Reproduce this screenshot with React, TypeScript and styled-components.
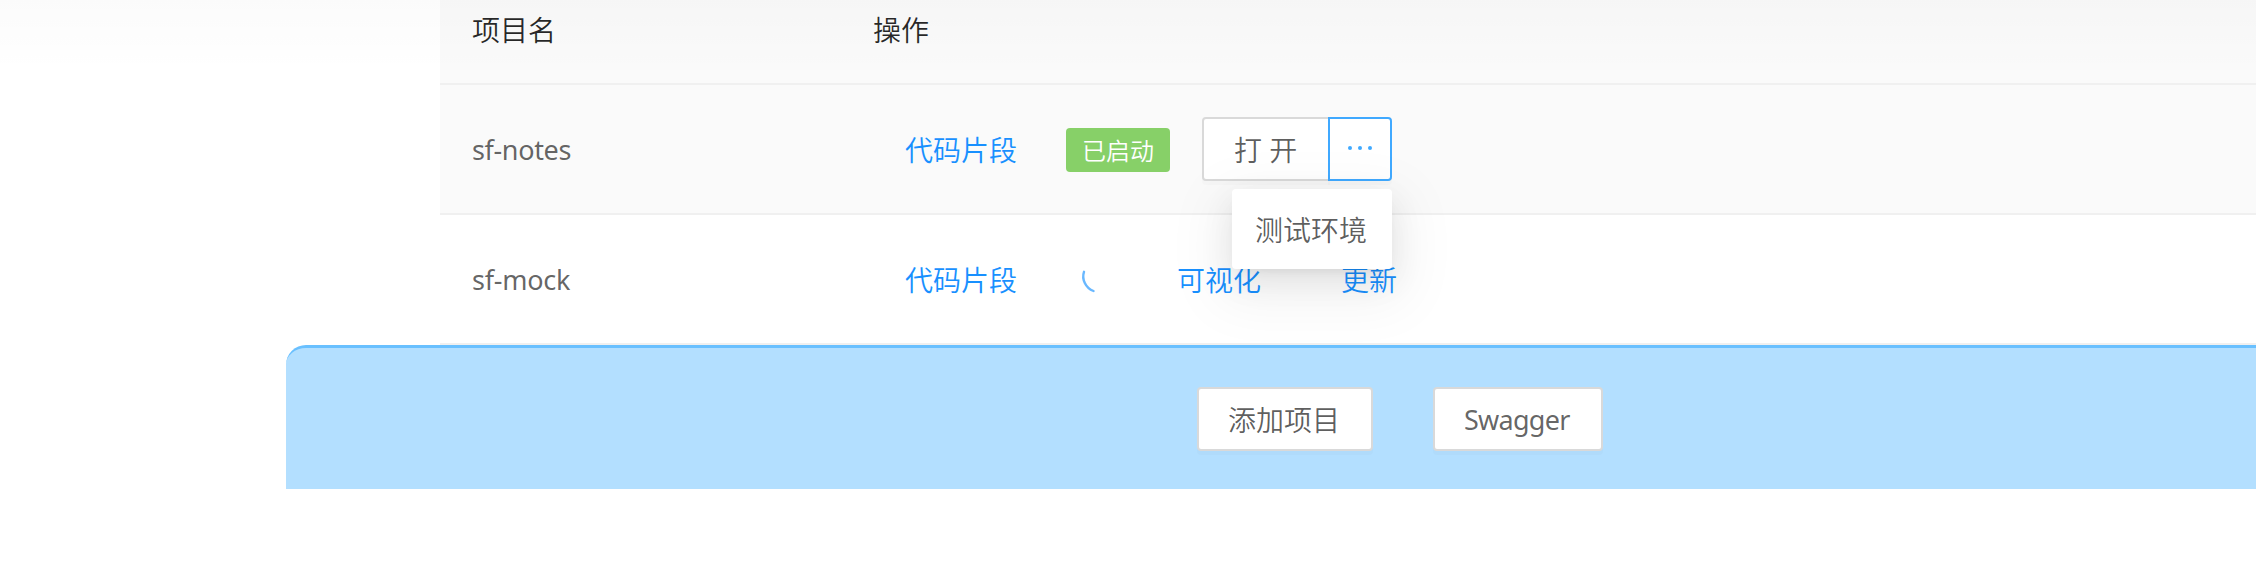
import React from 'react';
import styled, { createGlobalStyle } from 'styled-components';

const GlobalStyle = createGlobalStyle`
  *, *::before, *::after { box-sizing: border-box; }
  html, body { margin: 0; }
  body {
    background: #fff;
    color: rgba(0, 0, 0, 0.65);
    font-family: 'Noto Sans', 'Noto Sans CJK SC', sans-serif;
    font-size: 28px;
    font-weight: 350;
    line-height: 44px;
    overflow: hidden;
  }
`;

const Page = styled.div`
  position: relative;
  height: 581px;
  overflow: hidden;
`;

const TopShade = styled.div`
  position: absolute;
  inset: 0 0 auto 0;
  height: 72px;
  background: linear-gradient(rgba(0, 0, 0, 0.014), rgba(0, 0, 0, 0));
  pointer-events: none;
`;

const Table = styled.div`
  margin-left: 440px;
`;

const Row = styled.div<{ $head?: boolean; $hover?: boolean }>`
  display: grid;
  grid-template-columns: 401px 1fr;
  align-items: center;
  height: ${(p) => (p.$head ? 85 : 130)}px;
  padding-bottom: ${(p) => (p.$head ? 23 : 0)}px;
  background: ${(p) => (p.$head || p.$hover ? '#fafafa' : '#fff')};
  color: ${(p) => (p.$head ? 'rgba(0, 0, 0, 0.85)' : 'inherit')};
  border-bottom: 2px solid #f0f0f0;
`;

const Cell = styled.div`
  display: flex;
  align-items: center;
  padding-left: 32px;
`;

const NameCell = styled(Cell)`
  padding-top: 2px;
`;

const LinkButton = styled.button<{ $gap?: number }>`
  margin: 0 0 0 ${(p) => p.$gap ?? 0}px;
  height: 64px;
  padding: 2px 30px 0;
  border: 2px solid transparent;
  background: transparent;
  color: #1890ff;
  font: inherit;
  line-height: 44px;
  white-space: nowrap;
`;

const Tag = styled.span`
  margin: 2px 0 0 17px;
  height: 44px;
  padding: 1px 16px 0;
  border-radius: 4px;
  background: #87d068;
  color: #fff;
  font-size: 24px;
`;

const Spinner = styled.svg`
  margin: 4px 0 0 31px;
  width: 28px;
  height: 28px;
`;

const SplitButton = styled.div`
  position: relative;
  display: flex;
  margin-left: 32px;
`;

const Button = styled.button`
  height: 64px;
  padding: 1px 31px 0 29px;
  border: 2px solid #d9d9d9;
  border-radius: 4px;
  background: #fff;
  box-shadow: 0 4px 0 rgba(0, 0, 0, 0.016);
  color: rgba(0, 0, 0, 0.65);
  font: inherit;
  line-height: 44px;
  white-space: nowrap;
`;

const OpenButton = styled(Button)`
  width: 128px;
  padding: 1px 1px 0 0;
  border-radius: 4px 0 0 4px;
`;

const MoreButton = styled(Button)`
  display: flex;
  align-items: center;
  justify-content: center;
  width: 64px;
  margin-left: -2px;
  padding: 0;
  border-color: #40a9ff;
  border-radius: 0 4px 4px 0;
  color: #40a9ff;
`;

const Menu = styled.div`
  position: absolute;
  top: 72px;
  right: 0;
  width: 160px;
  height: 80px;
  padding: 19px 23px;
  border-radius: 4px;
  background: #fff;
  box-shadow:
    0 6px 12px -8px rgba(0, 0, 0, 0.12),
    0 12px 32px 0 rgba(0, 0, 0, 0.08),
    0 18px 56px 16px rgba(0, 0, 0, 0.05);
  white-space: nowrap;
  z-index: 1;
`;

const Footer = styled.footer`
  position: relative;
  z-index: 2;
  display: flex;
  gap: 60px;
  height: 144px;
  margin-left: 286px;
  padding: 39px 0 0 911px;
  border-top: 3px solid #69c0ff;
  border-top-left-radius: 20px;
  background: #b3dfff;
`;

const Latin = styled.span<{ $spacing: number }>`
  font-size: 27px;
  font-weight: 400;
  letter-spacing: ${(p) => p.$spacing}px;
  color: rgba(0, 0, 0, 0.62);
`;

export default function App() {
  return (
    <Page>
      <GlobalStyle />
      <Table>
        <Row $head>
          <Cell>项目名</Cell>
          <Cell>操作</Cell>
        </Row>
        <Row $hover>
          <NameCell><Latin $spacing={-0.35}>sf-notes</Latin></NameCell>
          <Cell>
            <LinkButton>代码片段</LinkButton>
            <Tag>已启动</Tag>
            <SplitButton>
              <OpenButton>打 开</OpenButton>
              <MoreButton aria-label="更多">
                <svg width="28" height="28" viewBox="0 0 28 28" fill="currentColor">
                  <circle cx="4" cy="13" r="2" />
                  <circle cx="14" cy="13" r="2" />
                  <circle cx="24" cy="13" r="2" />
                </svg>
              </MoreButton>
              <Menu>测试环境</Menu>
            </SplitButton>
          </Cell>
        </Row>
        <Row>
          <NameCell><Latin $spacing={-0.25}>sf-mock</Latin></NameCell>
          <Cell>
            <LinkButton>代码片段</LinkButton>
            <Spinner viewBox="0 0 28 28" fill="none" stroke="#69b8ff" strokeWidth="2.4" strokeLinecap="round">
              <path d="M4 4.8 C1.5 12 5.5 21 13.5 24" />
            </Spinner>
            <LinkButton $gap={37}>可视化</LinkButton>
            <LinkButton $gap={16}>更新</LinkButton>
          </Cell>
        </Row>
      </Table>
      <Footer>
        <Button>添加项目</Button>
        <Button><Latin $spacing={-0.75}>Swagger</Latin></Button>
      </Footer>
      <TopShade />
    </Page>
  );
}
